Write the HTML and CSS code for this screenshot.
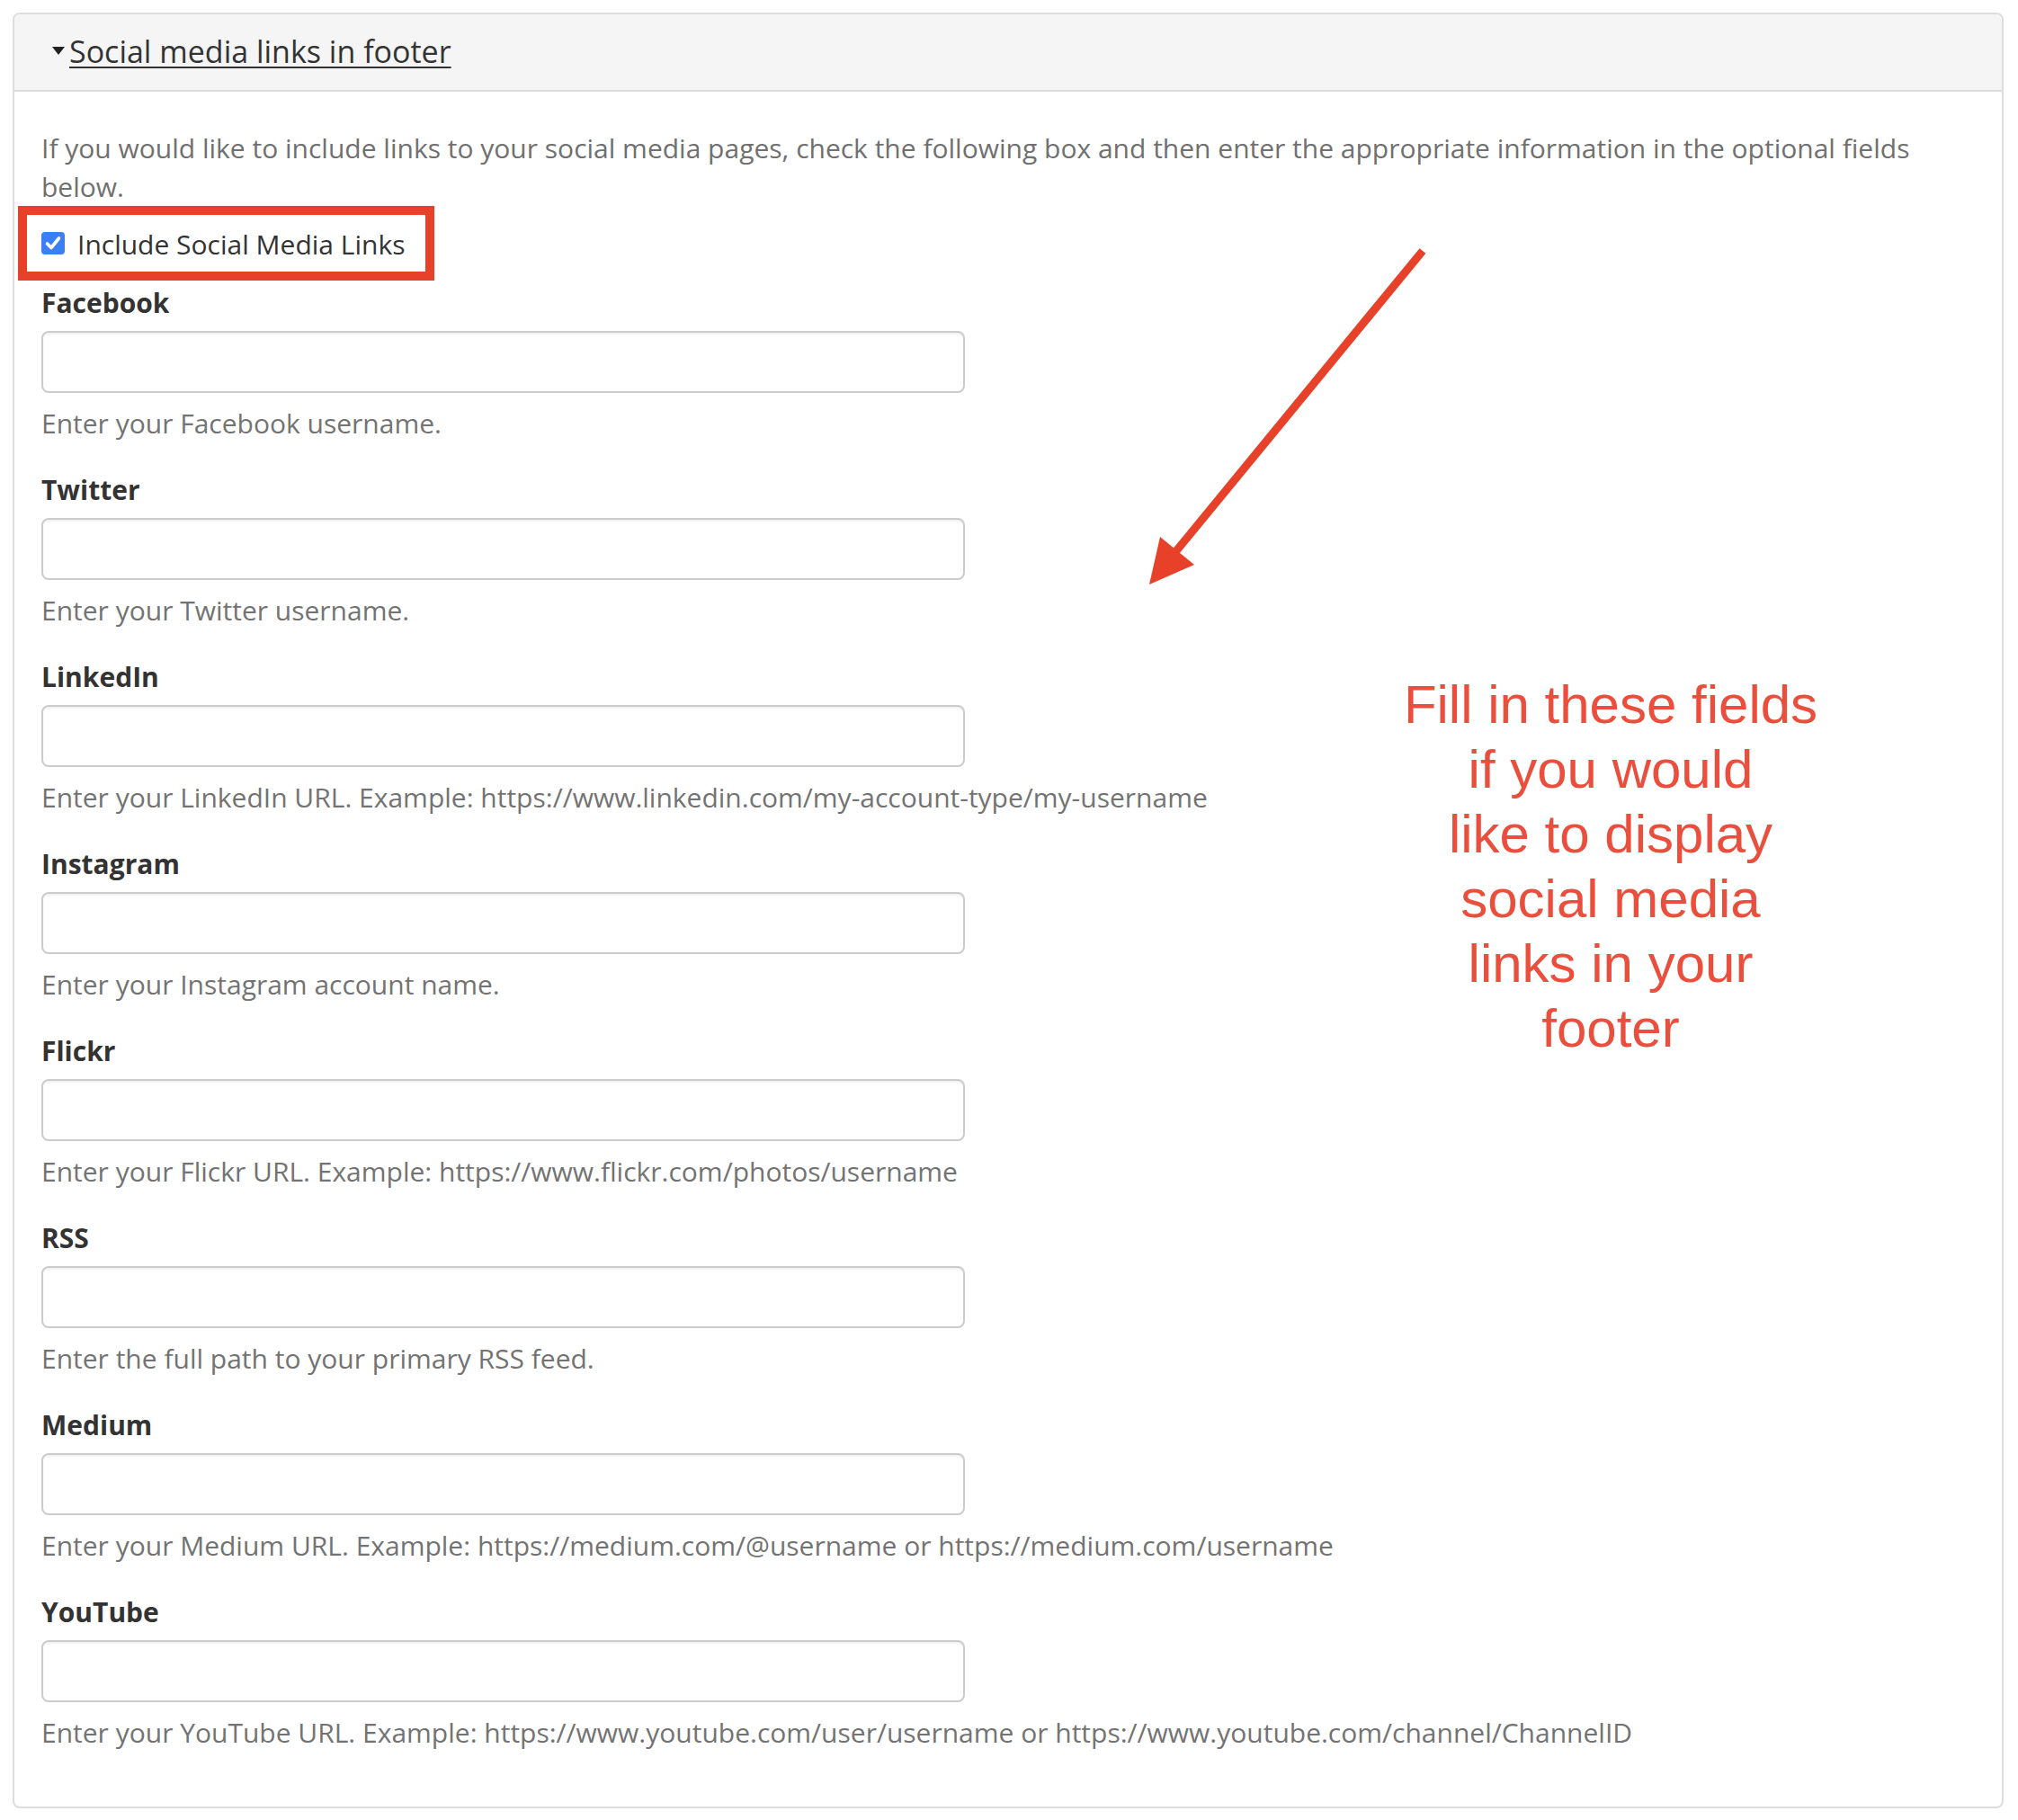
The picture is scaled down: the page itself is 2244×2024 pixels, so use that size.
FILE: index.html
```html
<!DOCTYPE html>
<html lang="en">
<head>
<meta charset="utf-8">
<title>Social media links in footer</title>
<link rel="stylesheet" href="styles.css">
</head>
<body>
<div class="panel">
  <div class="panel-heading">
    <span class="caret"></span><a class="panel-title" href="#">Social media links in footer</a>
  </div>
  <div class="panel-body">
    <p class="intro">If you would like to include links to your social media pages, check the following box and then enter the appropriate information in the optional fields below.</p>
    <div class="check-row">
      <span class="checkbox"><svg viewBox="0 0 26 25" width="26" height="25"><path d="M6.5 13 L11 17.5 L19.5 7" fill="none" stroke="#fff" stroke-width="3.6" stroke-linecap="round" stroke-linejoin="round"/></svg></span>
      <span class="check-label">Include Social Media Links</span>
      <span class="highlight-box"></span>
    </div>

    <div class="form-group">
      <label class="field-label">Facebook</label>
      <input class="field-input" type="text">
      <p class="help">Enter your Facebook username.</p>
    </div>
    <div class="form-group">
      <label class="field-label">Twitter</label>
      <input class="field-input" type="text">
      <p class="help">Enter your Twitter username.</p>
    </div>
    <div class="form-group">
      <label class="field-label">LinkedIn</label>
      <input class="field-input" type="text">
      <p class="help">Enter your LinkedIn URL. Example: https://www.linkedin.com/my-account-type/my-username</p>
    </div>
    <div class="form-group">
      <label class="field-label">Instagram</label>
      <input class="field-input" type="text">
      <p class="help">Enter your Instagram account name.</p>
    </div>
    <div class="form-group">
      <label class="field-label">Flickr</label>
      <input class="field-input" type="text">
      <p class="help">Enter your Flickr URL. Example: https://www.flickr.com/photos/username</p>
    </div>
    <div class="form-group">
      <label class="field-label">RSS</label>
      <input class="field-input" type="text">
      <p class="help">Enter the full path to your primary RSS feed.</p>
    </div>
    <div class="form-group">
      <label class="field-label">Medium</label>
      <input class="field-input" type="text">
      <p class="help">Enter your Medium URL. Example: https://medium.com/@username or https://medium.com/username</p>
    </div>
    <div class="form-group">
      <label class="field-label">YouTube</label>
      <input class="field-input" type="text">
      <p class="help">Enter your YouTube URL. Example: https://www.youtube.com/user/username or https://www.youtube.com/channel/ChannelID</p>
    </div>
  </div>
</div>

<svg class="arrow" width="340" height="400" viewBox="0 0 340 400">
  <line x1="322" y1="19" x2="42" y2="360" stroke="#e8412a" stroke-width="9"/>
  <polygon points="18,390 30,337 68,368" fill="#e8412a"/>
</svg>
<div class="annotation">Fill in these fields<br>if you would<br>like to display<br>social media<br>links in your<br>footer</div>
</body>
</html>
```

FILE: styles.css
```css
html, body {
  background: #fff;
}
body {
  margin: 14px 16px 14px 14px;
  font-family: "Open Sans", "Liberation Sans", sans-serif;
  font-size: 30px;
  line-height: 43px;
  color: #333;
}
.panel {
  border: 2px solid #ddd;
  border-radius: 8px;
  background: #fff;
}
.panel-heading {
  background: #f5f5f5;
  border-bottom: 2px solid #ddd;
  border-radius: 6px 6px 0 0;
  padding: 17px 30px 19px 42px;
  display: flex;
  align-items: center;
  line-height: 48px;
}
.caret {
  width: 0;
  height: 0;
  border-left: 7px solid transparent;
  border-right: 7px solid transparent;
  border-top: 9px solid #222;
  margin-right: 5px;
  margin-top: -1px;
}
.panel-title {
  font-size: 34px;
  color: #333;
  text-decoration: underline;
  text-decoration-thickness: 2px;
  text-underline-offset: 4px;
}
.panel-body {
  padding: 41px 30px 30px 30px;
}
.intro {
  margin: 0;
  color: #707070;
}
.check-row {
  position: relative;
  display: flex;
  align-items: center;
  margin: 21px 0 22px 0;
  height: 43px;
  width: max-content;
  white-space: nowrap;
}
.checkbox {
  width: 26px;
  height: 25px;
  border-radius: 4px;
  background: #3b7ff5;
  display: flex;
  margin-right: 14px;
  margin-top: -2px;
}
.checkbox svg {
  display: block;
}
.check-label {
  color: #333;
}
.highlight-box {
  position: absolute;
  left: -26px;
  top: -21px;
  width: 463px;
  height: 83px;
  box-sizing: border-box;
  border: 10px solid #e8412a;
}
.field-label {
  display: block;
  font-weight: 700;
  color: #333;
  margin-bottom: 10px;
}
.field-input {
  display: block;
  box-sizing: border-box;
  width: 1027px;
  height: 69px;
  margin: 0;
  border: 2px solid #ccc;
  border-radius: 8px;
  background: #fff;
  box-shadow: inset 0 2px 2px rgba(0, 0, 0, 0.06);
  font: inherit;
  padding: 0 20px;
}
.help {
  margin: 12px 0 31px 0;
  color: #737373;
}
.arrow {
  position: absolute;
  left: 1260px;
  top: 260px;
}
.annotation {
  position: absolute;
  left: 1491px;
  top: 748px;
  width: 600px;
  text-align: center;
  font-family: "Liberation Sans", Arial, sans-serif;
  font-size: 60px;
  line-height: 72px;
  color: #ea4e3c;
}
```
